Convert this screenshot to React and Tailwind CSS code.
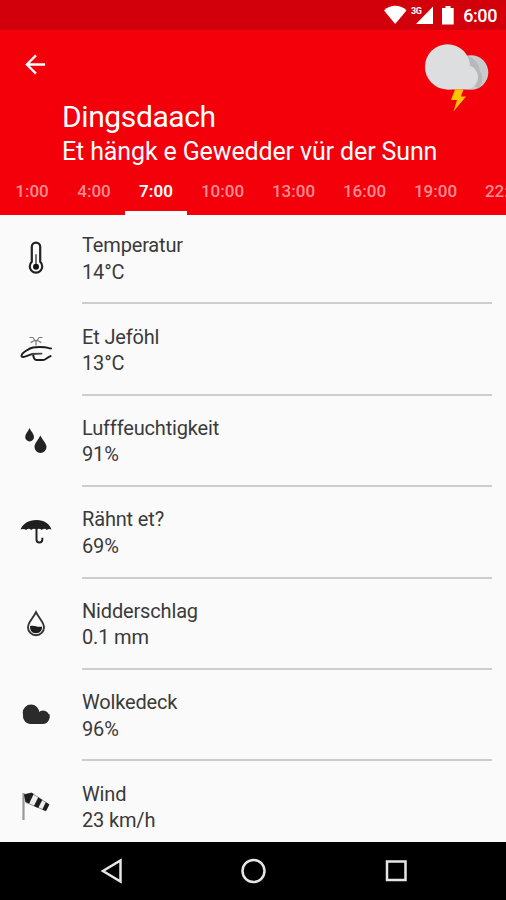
import React, { useState } from "react";

const hours = ["1:00", "4:00", "7:00", "10:00", "13:00", "16:00", "19:00", "22:00"];

const ThermometerIcon = () => (
  <svg viewBox="0 -1.3 60 60" className="h-[60px] w-[60px]" fill="none">
    <path
      d="M21.8 31.500V16.500a4.200 4.200 0 0 1 8.400 0v15a6.200 6.200 0 1 1-8.400 0z"
      stroke="#222"
      strokeWidth="2.200"
    />
    <path d="M26 24v12" stroke="#555" strokeWidth="1.6" />
    <circle cx="26" cy="36.500" r="3" fill="#111" />
  </svg>
);

const FeelingIcon = () => (
  <svg viewBox="0 0 60 60" className="h-[60px] w-[60px]" fill="none" strokeLinecap="round">
    <path
      d="M20 17.500h3M32 17.500h-3M23.500 18.500l1.500 2M28.500 18.500l-1.500 2M21 22.500l2.500-1.500M31 22.500l-2.500-1.500M24.500 20.700h3M26 21v4"
      stroke="#777"
      strokeWidth="1.200"
    />
    <path
      d="M41 28.500c-2-.2-4-1-6-1.200-4-.5-9-.4-12 .2-3.500.8-5.500 2.500-8 4-2.600 1.600-4.400 3.800-3 5.200 2.500 1.500 5.800-2 11.100-2.700.2 3 .6 5.800 3.500 6 3.200.2 6 .3 8-.4 2.200-1 3.500-2.600 6-3.500"
      stroke="#1c1c1c"
      strokeWidth="2"
    />
    <path d="M22 34l9.500-.3" stroke="#444" strokeWidth="1.800" />
  </svg>
);

const HumidityIcon = () => (
  <svg viewBox="0 1 60 60" className="h-[60px] w-[60px]" fill="#232323">
    <path d="M19.500 18c1.500 3.300 4.500 6 4.500 9a4.400 4.400 0 0 1-8.800 0c0-3 3-5.700 4.300-9z" />
    <path d="M30.300 25.500c2 4.300 6.200 7.600 6.200 11.500a6 6 0 0 1-12 0c0-3.900 3.900-7.200 5.800-11.500z" />
  </svg>
);

const UmbrellaIcon = () => (
  <svg viewBox="0 2.900 60 60" className="h-[60px] w-[60px]" fill="none">
    <path
      d="M10.500 29.500C13 23.800 18.500 20 26.500 20s13 4 15 9.500c-1.700-1.200-3.500-.8-4.700.5-1.500-1.800-3.600-1.800-5 0-1.500-1.500-3.500-1.700-5.300-.6-1.900-1.100-3.800-.9-5.300.6-1.500-1.800-3.500-1.800-5 0-1.600-1.300-3.700-1.700-5.700-.5z"
      fill="#1f1f1f"
    />
    <path d="M26.500 29v10.500a2.900 2.900 0 0 0 5.800 0v-1.800" stroke="#222" strokeWidth="2" />
  </svg>
);

const RainfallIcon = () => (
  <svg viewBox="0 -0.700 60 60" className="h-[60px] w-[60px]" fill="none">
    <path
      d="M26 17.500c2.500 5.500 8 10 8 15a8 8 0 0 1-16 0c0-5 5.500-9.500 8-15z"
      stroke="#333"
      strokeWidth="1.900"
    />
    <path d="M20 31.500c4-1.700 7 1.500 12 .3.300 4-2 6.700-6 6.700s-6.200-2.800-6-7z" fill="#1d1d1d" />
  </svg>
);

const CloudIcon = () => (
  <svg viewBox="0 0.700 60 60" className="h-[60px] w-[60px]" fill="#2b2b2b">
    <circle cx="21" cy="27.500" r="8.300" />
    <circle cx="33" cy="31.800" r="6.500" />
    <path d="M13 29h26.500v2.500c0 4-3 7.200-7 7.200H20.500c-4.500 0-7.500-4-7.500-8z" />
  </svg>
);

const WindsockIcon = () => (
  <svg viewBox="0 0 60 60" className="h-[60px] w-[60px]" fill="none">
    <path d="M13.500 16v27" stroke="#999" strokeWidth="2.200" />
    <path d="M14.500 17.500l7-1.500L39 27.500l-3.200 6.300L16 25.500z" fill="#eee" stroke="#777" strokeWidth="0.800" />
    <path
      d="M14 17.500l7.700-1.700 2 1.200-4.500 9.500-3.700-1.500zM28.300 20.200l4 2.700-4.100 8-4.300-2zM35.800 25.200l3.500 2.300-3.300 6.500-3.700-1.500z"
      fill="#1e1e1e"
    />
  </svg>
);

const details = [
  { label: "Temperatur", value: "14°C", icon: ThermometerIcon },
  { label: "Et Jeföhl", value: "13°C", icon: FeelingIcon },
  { label: "Lufffeuchtigkeit", value: "91%", icon: HumidityIcon },
  { label: "Rähnt et?", value: "69%", icon: UmbrellaIcon },
  { label: "Nidderschlag", value: "0.1 mm", icon: RainfallIcon },
  { label: "Wolkedeck", value: "96%", icon: CloudIcon },
  { label: "Wind", value: "23 km/h", icon: WindsockIcon },
];

const StatusBar = () => (
  <div className="flex h-[30px] items-center justify-end bg-[#d1000a] pr-[9px] text-white">
    <svg viewBox="0 0 76 30" className="h-[30px] w-[76px]" fill="white">
      <path d="M0 10.500C6 4.300 16.500 4.300 22.500 10.500L11.200 24z" />
      <path d="M49 6.500v17.500H32z" />
      <path d="M61.500 6h5v2h3.200v16.500H58V8h3.500z" />
      <text x="27" y="14" fontSize="9" fontWeight="700" fontFamily="Roboto" textLength="11">
        3G
      </text>
    </svg>
    <span className="ml-[3px] pt-px text-[18px] leading-[30px] font-medium tracking-[-0.4px]">6:00</span>
  </div>
);

const StormIcon = () => (
  <svg viewBox="0 0 70 85" className="h-[85px] w-[70px] shrink-0">
    <circle cx="49" cy="42.500" r="17.300" fill="#c9cacc" />
    <path d="M46 26c8 3 11.500 9 11.800 15 3.500 4 3.500 12-1 17L42 52z" fill="#b6b8ba" />
    <circle cx="25.500" cy="36.800" r="22.600" fill="#dddedf" />
    <path d="M25 35h18.500c7 0 12.500 5.500 12.500 12.300S50.500 59.500 43.500 59.500H25z" fill="#dddedf" />
    <path d="M33 59.500h8.500l-2.700 7H44L31.500 81.500l3.500-11.500h-6z" fill="#ffc400" />
  </svg>
);

const App = () => {
  const [activeHour, setActiveHour] = useState("7:00");

  return (
    <div className="flex h-[900px] w-[506px] flex-col overflow-hidden bg-[#fafafa] font-['Roboto',sans-serif]">
      <StatusBar />

      <header className="flex h-[185px] shrink-0 flex-col bg-[#f3000b] text-white">
        <div className="flex h-[70px] items-start justify-between pr-[14px] pl-[24px]">
          <svg viewBox="0 0 24 24" className="mt-[23px] h-[23px] w-[23px]" fill="none" stroke="white" strokeWidth="2.400">
            <path d="M22 12H3M12.500 2.500L3 12l9.500 9.500" />
          </svg>
          <StormIcon />
        </div>
        <h1 className="pl-[62px] text-[30px] leading-[34px] tracking-[-0.400px]">Dingsdaach</h1>
        <h2 className="pl-[62px] text-[25px] leading-[35px] tracking-[-0.130px] whitespace-nowrap">
          Et hängk e Gewedder vür der Sunn
        </h2>
        <nav className="flex h-[46px] overflow-hidden pl-px">
          {hours.map((hour) => (
            <button
              key={hour}
              onClick={() => setActiveHour(hour)}
              className={`h-full shrink-0 border-b-4 pt-[2px] text-[17px] leading-none font-medium ${
                hour.length > 4 ? "w-[71px]" : "w-[62px]"
              } ${
                hour === activeHour
                  ? "border-white font-semibold text-white"
                  : "border-transparent text-[#ff8e93]"
              }`}
            >
              {hour}
            </button>
          ))}
        </nav>
      </header>

      <main className="-mt-[2px] min-h-0 flex-1 overflow-hidden">
        {details.map(({ label, value, icon: Icon }) => (
          <div key={label} className="flex h-[91.400px] items-center pr-[14px] pl-[10px]">
            <Icon />
            <div className="ml-3 flex h-full flex-1 flex-col justify-center border-b-2 border-[#cdcdcd] pt-[2px] text-[20px] leading-[26.500px] tracking-[-0.160px] text-[#3a3a3a]">
              <p>{label}</p>
              <p>{value}</p>
            </div>
          </div>
        ))}
      </main>

      <footer className="flex h-[58px] shrink-0 items-center bg-black">
        <svg viewBox="0 0 506 58" className="h-[58px] w-[506px]" fill="none" stroke="#e6e6e6" strokeWidth="2.500">
          <path d="M120.500 18.500v21L103 29z" />
          <circle cx="253.500" cy="29" r="11" />
          <path d="M387 19.500h18.500v18.500H387z" />
        </svg>
      </footer>
    </div>
  );
};

export default App;
